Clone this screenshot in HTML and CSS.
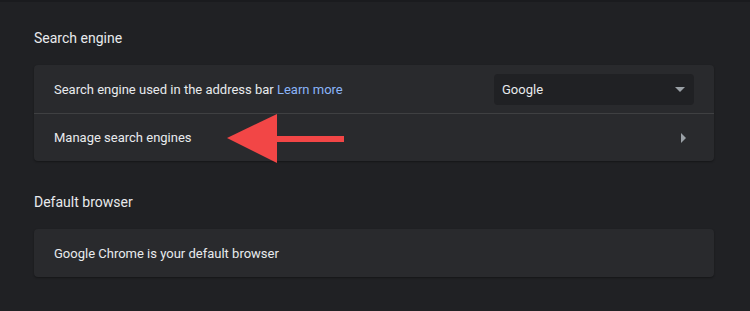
FILE: index.html
```html
<!DOCTYPE html>
<html lang="en">
  <head>
    <meta charset="UTF-8" />
    <meta name="viewport" content="width=device-width, initial-scale=1.0" />
    <title>Settings</title>
    <link rel="stylesheet" href="styles.css">
  </head>
  <body>
    <div class="page">
      <h2 class="section-title">Search engine</h2>
      <div class="card">
        <div class="row">
          <span class="label">Search engine used in the address bar <a href="#">Learn more</a></span>
          <div class="select">
            <span>Google</span>
            <span class="caret"></span>
          </div>
        </div>
        <div class="row divider">
          <span class="label">Manage search engines</span>
          <span class="chevron"></span>
          <div class="pointer">
            <span class="pointer-head"></span>
            <span class="pointer-shaft"></span>
          </div>
        </div>
      </div>

      <h2 class="section-title">Default browser</h2>
      <div class="card">
        <div class="row">
          <span class="label">Google Chrome is your default browser</span>
        </div>
      </div>
    </div>
  </body>
</html>
```

FILE: styles.css
```css
* {
  box-sizing: border-box;
}
html,
body {
  margin: 0;
  padding: 0;
  background-color: #202124;
  font-family: Roboto, "Liberation Sans", sans-serif;
  color: #e8eaed;
}
body {
  border-top: 2px solid #1a1b1e;
  height: 311px;
  overflow: hidden;
}
.page {
  width: 680px;
  margin-left: 34px;
  padding-top: 20px;
}
.section-title {
  margin: 0;
  font-size: 14px;
  font-weight: 400;
  line-height: 32px;
  height: 43px;
}
.card {
  background: #292a2d;
  border-radius: 4px;
  box-shadow: 0 1px 2px rgba(0, 0, 0, 0.35);
  margin-bottom: 25px;
}
.row {
  position: relative;
  display: flex;
  align-items: center;
  justify-content: space-between;
  height: 48px;
  padding: 0 20px;
  font-size: 13px;
}
.divider {
  border-top: 1px solid #3f4042;
}
.label a {
  color: #8ab4f8;
  text-decoration: none;
}
.select {
  width: 200px;
  height: 31px;
  background: #202124;
  border-radius: 4px;
  display: flex;
  align-items: center;
  justify-content: space-between;
  padding: 0 9px 0 8px;
  font-size: 13px;
}
.caret {
  width: 0;
  height: 0;
  border-left: 5px solid transparent;
  border-right: 5px solid transparent;
  border-top: 5px solid #9aa0a6;
}
.chevron {
  width: 0;
  height: 0;
  margin-right: 8px;
  border-top: 5px solid transparent;
  border-bottom: 5px solid transparent;
  border-left: 5px solid #9aa0a6;
}
.pointer {
  position: absolute;
  left: 193px;
  top: 0;
  display: flex;
  align-items: center;
  height: 49px;
}
.pointer-head {
  width: 0;
  height: 0;
  border-top: 24px solid transparent;
  border-bottom: 25px solid transparent;
  border-right: 50px solid #f24646;
}
.pointer-shaft {
  width: 67px;
  height: 6px;
  background: #f24646;
}
```
